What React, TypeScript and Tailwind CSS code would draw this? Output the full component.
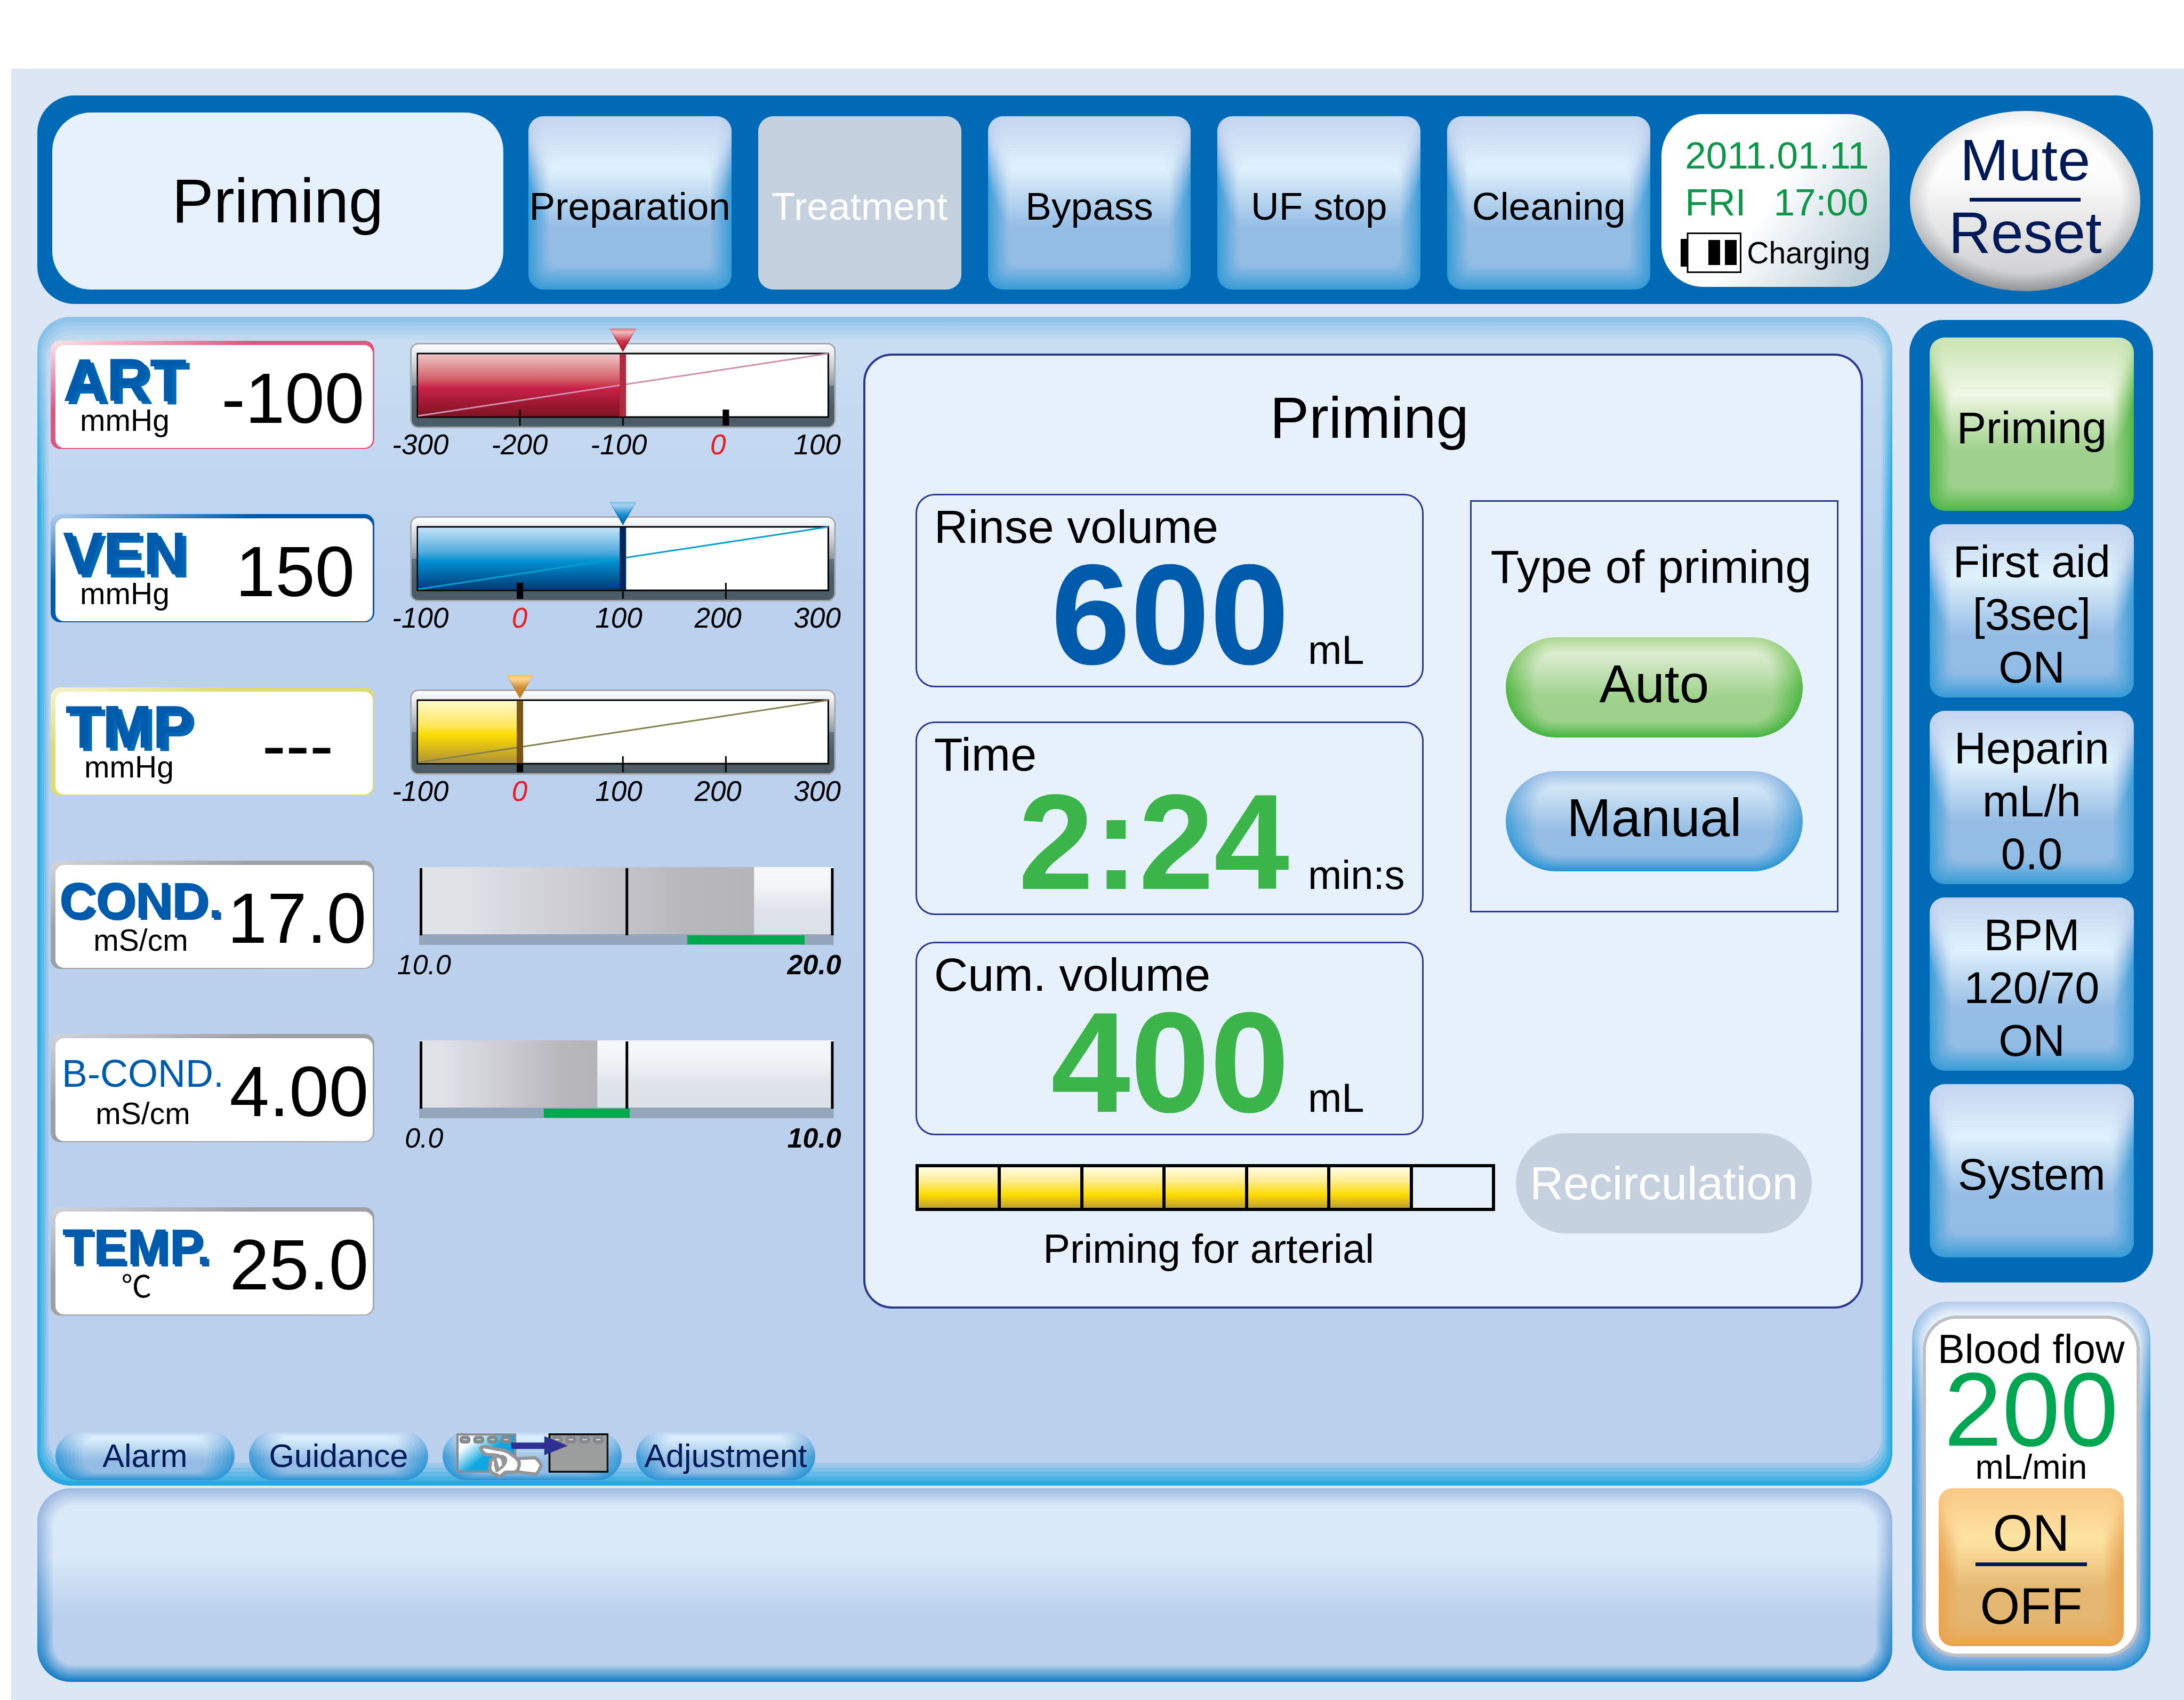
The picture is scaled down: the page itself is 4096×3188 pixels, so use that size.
import React from 'react';

type Stop = [number, string];

interface Skin {
  outer: Stop[];
  inner: Stop[];
  x: number;
  top: number;
  bottom: number;
  radius: number | string;
  innerRadius: number;
  steps: number;
}

const channels = (hex: string) => [1, 3, 5].map((i) => parseInt(hex.slice(i, i + 2), 16));

const mix = (a: string, b: string, t: number) => {
  const ca = channels(a);
  const cb = channels(b);
  return `rgb(${ca.map((v, i) => Math.round(v + (cb[i] - v) * t)).join(',')})`;
};

/* Bevelled surface: nested rounded layers blended from the outer to the inner gradient. */
function Gloss({ skin }: { skin: Skin }) {
  const layers = Array.from({ length: skin.steps + 1 }, (_, i) => i / skin.steps);
  return (
    <span aria-hidden="true" className="absolute inset-0">
      {layers.map((t) => {
        const stops = skin.outer.map(([pos, color], i) => {
          const [innerPos, innerColor] = skin.inner[i];
          return `${mix(color, innerColor, t)} ${pos + (innerPos - pos) * t}%`;
        });
        return (
          <span
            key={t}
            className="absolute"
            style={{
              left: skin.x * t,
              right: skin.x * t,
              top: skin.top * t,
              bottom: skin.bottom * t,
              borderRadius:
                typeof skin.radius === 'string' ? skin.radius : skin.radius + (skin.innerRadius - skin.radius) * t,
              background: `linear-gradient(to bottom, ${stops.join(', ')})`,
            }}
          />
        );
      })}
    </span>
  );
}

const blueKey: Skin = {
  outer: [[0, '#c5d6ef'], [14, '#b3caec'], [38, '#3f9fd8'], [100, '#389bd6']],
  inner: [[0, '#e0f4fe'], [14, '#cfe5f6'], [61, '#94bce5'], [100, '#93bce5']],
  x: 39, top: 97, bottom: 44, radius: 28, innerRadius: 16, steps: 18,
};
const greenKey: Skin = {
  outer: [[0, '#cce5b5'], [10, '#b5da9c'], [38, '#54b948'], [100, '#50b747']],
  inner: [[0, '#f1f8e8'], [10, '#e3f0d4'], [61, '#9ed18b'], [100, '#9ed18b']],
  x: 39, top: 104, bottom: 42, radius: 28, innerRadius: 16, steps: 22,
};
const orangeKey: Skin = {
  outer: [[0, '#f9c985'], [14, '#f5c079'], [45, '#eaa551'], [100, '#eaa34e']],
  inner: [[0, '#fee4a4'], [14, '#fadb98'], [61, '#e4b872'], [100, '#e3b771']],
  x: 38, top: 92, bottom: 46, radius: 26, innerRadius: 14, steps: 22,
};
const bluePill: Skin = {
  outer: [[0, '#a3c2e8'], [50, '#4ba3da'], [100, '#2c95d5']],
  inner: [[0, '#d3e7f6'], [66, '#94bce5'], [100, '#93bce5']],
  x: 56, top: 29, bottom: 29, radius: 94, innerRadius: 40, steps: 10,
};
const greenPill: Skin = {
  outer: [[0, '#acd890'], [50, '#56ba4a'], [100, '#45b340']],
  inner: [[0, '#deedd3'], [66, '#9ed18b'], [100, '#9ed18b']],
  x: 56, top: 29, bottom: 29, radius: 94, innerRadius: 40, steps: 20,
};
const tabSkin: Skin = {
  outer: [[0, '#bcd2ef'], [50, '#459fd9'], [100, '#2c95d5']],
  inner: [[0, '#def2fd'], [66, '#94bce5'], [100, '#93bce5']],
  x: 50, top: 11, bottom: 14, radius: 46, innerRadius: 26, steps: 7,
};
const ovalSkin: Skin = {
  outer: [[0, '#ededee'], [60, '#c6c7c9'], [100, '#929498']],
  inner: [[0, '#ffffff'], [35, '#fbfbfb'], [100, '#d1d1d3']],
  x: 34, top: 30, bottom: 34, radius: '50%', innerRadius: 0, steps: 20,
};
const mainFrame: Skin = {
  outer: [[0, '#90c4ea'], [15, '#29abe2'], [100, '#27aae2']],
  inner: [[0, '#c9def2'], [22, '#bbd1ee'], [100, '#bad0ed']],
  x: 21, top: 43, bottom: 43, radius: 62, innerRadius: 44, steps: 5,
};
const lowerFrame: Skin = {
  outer: [[0, '#a0bae2'], [35, '#92b4e0'], [100, '#137dc5']],
  inner: [[0, '#dae9f8'], [32, '#d9e9f7'], [68, '#bad0ed']],
  x: 30, top: 31, bottom: 31, radius: 62, innerRadius: 40, steps: 12,
};
const flowFrame: Skin = {
  outer: [[0, '#b5ccec'], [30, '#2c92d2'], [100, '#2590d1']],
  inner: [[0, '#eef7fd'], [30, '#bbd2ee'], [100, '#92b5e1']],
  x: 22, top: 27, bottom: 27, radius: 68, innerRadius: 60, steps: 14,
};

function HeaderKey({ label, disabled = false }: { label: string; disabled?: boolean }) {
  return (
    <button
      type="button"
      disabled={disabled}
      className={
        disabled
          ? 'relative flex h-[325px] min-w-0 items-center justify-center rounded-[28px] bg-[#c5d1df] text-white'
          : 'relative flex h-[325px] min-w-0 items-center justify-center rounded-[28px] text-black'
      }
    >
      {!disabled && <Gloss skin={blueKey} />}
      <span className="relative whitespace-nowrap pt-3 text-[73px] leading-[84px]">{label}</span>
    </button>
  );
}

function SideKey({ lines, skin = blueKey }: { lines: string[]; skin?: Skin }) {
  return (
    <button type="button" className="relative flex h-[325px] items-center justify-center text-black">
      <Gloss skin={skin} />
      <span className="relative flex flex-col items-center whitespace-nowrap pt-[14px] text-[83px] leading-[99px]">
        {lines.map((line) => (
          <span key={line}>{line}</span>
        ))}
      </span>
    </button>
  );
}

interface GaugeProps {
  id: string;
  at: number;
  zeroAt: number;
  fill: string[];
  bar: string;
  line: string;
  pointer: string[];
  labels: string[];
}

function Gauge({ id, at, zeroAt, fill, bar, line, pointer, labels }: GaugeProps) {
  const x = 13 + 772 * at;
  return (
    <div className="-mt-[23px]">
      <svg viewBox="0 0 798 187" className="block w-full" role="img" aria-label={`${id} gauge`}>
        <defs>
          <linearGradient id={`${id}-frame`} x1="0" y1="0" x2="0" y2="1">
            <stop offset="0" stopColor="#ffffff" />
            <stop offset="0.15" stopColor="#e3e6e9" />
            <stop offset="0.3" stopColor="#c3cad0" />
            <stop offset="0.5" stopColor="#8b98a2" />
            <stop offset="0.501" stopColor="#5f7380" />
            <stop offset="0.75" stopColor="#4c5c66" />
            <stop offset="1" stopColor="#4c5c66" />
          </linearGradient>
          <linearGradient id={`${id}-fill`} x1="0" y1="0" x2="0" y2="1">
            <stop offset="0" stopColor={fill[0]} />
            <stop offset="0.4" stopColor={fill[1]} />
            <stop offset="0.54" stopColor={fill[2]} />
            <stop offset="1" stopColor={fill[3]} />
          </linearGradient>
          <linearGradient id={`${id}-ptr`} x1="0" y1="0" x2="0" y2="1">
            <stop offset="0" stopColor={pointer[0]} />
            <stop offset="0.15" stopColor={pointer[1]} />
            <stop offset="0.55" stopColor={pointer[2]} />
            <stop offset="1" stopColor={pointer[3]} />
          </linearGradient>
        </defs>
        <rect x="1.5" y="28.5" width="795" height="157" rx="14" fill={`url(#${id}-frame)`} stroke="#a7a9ac" strokeWidth="3" />
        <rect x="14" y="47" width="770" height="119" fill="#ffffff" stroke="#000000" strokeWidth="3" />
        <rect x="15" y="49" width={x - 15} height="116" fill={`url(#${id}-fill)`} />
        <line x1="15" y1="164" x2="784" y2="47" stroke={line} strokeWidth="3" />
        {[0.25, 0.5, 0.75].map((p) => {
          const w = p === zeroAt ? 12 : 3;
          return <rect key={p} x={13 + 772 * p - w / 2} y="152" width={w} height="30" fill="#000000" />;
        })}
        <rect x={x - 6} y="48" width="12" height="117" fill={bar} />
        <polygon points={`${x - 25},0 ${x + 25},0 ${x},44`} fill={`url(#${id}-ptr)`} />
        <path d={`M${x - 25} 0L${x} 44L${x + 25} 0L${x} 36Z`} fill={pointer[3]} opacity="0.5" />
      </svg>
      <div className="-ml-[74px] -mr-[58px] mt-[3px] grid grid-cols-5 text-center text-[53px] italic leading-[56px]">
        {labels.map((l) => (
          <span key={l} className={l === '0' ? 'text-[#ed1c24]' : 'text-black'}>
            {l}
          </span>
        ))}
      </div>
    </div>
  );
}

interface LevelProps {
  id: string;
  level: number;
  range: [number, number];
  low: string;
  high: string;
}

function Level({ id, level, range, low, high }: LevelProps) {
  return (
    <div className="mt-3 pl-[17px] pr-1">
      <svg viewBox="0 0 777 146" className="block w-full" role="img" aria-label={`${id} level`}>
        <defs>
          <linearGradient id={`${id}-bg`} x1="0" y1="0" x2="0" y2="1">
            <stop offset="0" stopColor="#f7f8fa" />
            <stop offset="0.3" stopColor="#f2f3f6" />
            <stop offset="0.65" stopColor="#dee2e9" />
            <stop offset="1" stopColor="#dde0e7" />
          </linearGradient>
          <linearGradient id={`${id}-lv`} x1="0" y1="0" x2="1" y2="0">
            <stop offset="0" stopColor="#dfe2e7" />
            <stop offset="0.15" stopColor="#dfe1e7" />
            <stop offset="0.25" stopColor="#d9d9e0" />
            <stop offset="0.8" stopColor="#b8b7bc" />
            <stop offset="1" stopColor="#b5b4b9" />
          </linearGradient>
        </defs>
        <rect width="777" height="127" fill={`url(#${id}-bg)`} />
        <rect width={777 * level} height="127" fill={`url(#${id}-lv)`} />
        <rect y="126" width="777" height="20" fill="#94a6b9" />
        <rect x={777 * range[0]} y="128" width={777 * (range[1] - range[0])} height="17" fill="#00a94f" />
        <rect x="1" y="2" width="5" height="126" fill="#000000" />
        <rect x="387" y="2" width="5" height="126" fill="#000000" />
        <rect x="772" y="2" width="5" height="126" fill="#000000" />
      </svg>
      <div className="-ml-[44px] -mr-[14px] mt-2 flex justify-between text-[52px] italic leading-[58px]">
        <span className="min-w-[106px] text-center">{low}</span>
        <span className="font-bold">{high}</span>
      </div>
    </div>
  );
}

interface CardProps {
  label: string;
  unit: string;
  value: string;
  frame: string;
  labelClass: string;
  columnClass: string;
  valueClass: string;
}

function ValueCard({ label, unit, value, frame, labelClass, columnClass, valueClass }: CardProps) {
  return (
    <div className={`h-[203px] min-w-0 flex-[595] rounded-[18px] pb-0.5 pl-[9px] pr-[3px] pt-2 ${frame}`}>
      <div className="flex h-full items-center justify-between rounded-[16px] bg-white">
        <div className={`flex shrink-0 flex-col items-center pt-1 ${columnClass}`}>
          <span className={`whitespace-nowrap leading-[84px] text-[#005bac] ${labelClass}`}>{label}</span>
          <span className="text-[57px] leading-[66px]">{unit}</span>
        </div>
        <span className={`whitespace-nowrap pt-1.5 text-[134px] leading-[150px] ${valueClass}`}>{value}</span>
      </div>
    </div>
  );
}

const bigLabel = 'text-[113px] font-bold [text-shadow:7px_6px_0_#0068b5]';
const midLabel = 'text-[95px] font-bold [text-shadow:4px_4px_0_#005bac]';
const greyFrame = 'bg-[linear-gradient(to_bottom_right,#d3d5dc,#9fa0a4_32%,#9fa0a4_70%,#a9aaae)]';

const rows: { card: CardProps; meter: React.ReactNode }[] = [
  {
    card: {
      label: 'ART', unit: 'mmHg', value: '-100',
      frame: 'bg-[linear-gradient(to_bottom_right,#fbe6ea,#e3547f_32%)]',
      labelClass: bigLabel, columnClass: 'w-[260px]', valueClass: 'pr-4',
    },
    meter: (
      <Gauge
        id="ART" at={0.5} zeroAt={0.75}
        fill={['#eec3c5', '#d46067', '#c92048', '#7d1222']}
        bar="#b02a40" line="#cd91ae" pointer={['#de6f78', '#f0bcc0', '#cf3449', '#a31a2e']}
        labels={['-300', '-200', '-100', '0', '100']}
      />
    ),
  },
  {
    card: {
      label: 'VEN', unit: 'mmHg', value: '150',
      frame: 'bg-[linear-gradient(to_bottom_right,#b5d0ee,#005bac_32%)]',
      labelClass: bigLabel, columnClass: 'w-[260px]', valueClass: 'pr-[34px]',
    },
    meter: (
      <Gauge
        id="VEN" at={0.5} zeroAt={0.25}
        fill={['#c2e3f8', '#4fa9dd', '#0090d3', '#003a76']}
        bar="#00285a" line="#00a0cf" pointer={['#7cbfea', '#a5d2f0', '#1b8fd0', '#0064a8']}
        labels={['-100', '0', '100', '200', '300']}
      />
    ),
  },
  {
    card: {
      label: 'TMP', unit: 'mmHg', value: '---',
      frame: 'bg-[linear-gradient(to_bottom_right,#f7f4d0,#dddc6e_28%)]',
      labelClass: bigLabel, columnClass: 'w-[276px]', valueClass: 'pr-[74px]',
    },
    meter: (
      <Gauge
        id="TMP" at={0.25} zeroAt={0.25}
        fill={['#fff9cb', '#ffe75c', '#fcdc00', '#ae9238']}
        bar="#7a5317" line="#85814e" pointer={['#fdb83c', '#fedb96', '#cf8b33', '#b9792a']}
        labels={['-100', '0', '100', '200', '300']}
      />
    ),
  },
  {
    card: {
      label: 'COND.', unit: 'mS/cm', value: '17.0', frame: greyFrame,
      labelClass: midLabel, columnClass: 'w-[320px]', valueClass: '-ml-4 pr-3',
    },
    meter: <Level id="COND" level={0.808} range={[0.647, 0.93]} low="10.0" high="20.0" />,
  },
  {
    card: {
      label: 'B-COND.', unit: 'mS/cm', value: '4.00', frame: greyFrame,
      labelClass: 'text-[72px]', columnClass: 'w-[328px]', valueClass: '-ml-4 pr-2',
    },
    meter: <Level id="BCOND" level={0.43} range={[0.301, 0.508]} low="0.0" high="10.0" />,
  },
  {
    card: {
      label: 'TEMP.', unit: '℃', value: '25.0', frame: greyFrame,
      labelClass: midLabel, columnClass: 'w-[304px]', valueClass: 'pr-2',
    },
    meter: null,
  },
];

interface ReadoutProps {
  label: string;
  value: string;
  unit: string;
  space: string;
  valueClass: string;
}

function Readout({ label, value, unit, space, valueClass }: ReadoutProps) {
  return (
    <div className={`h-[363px] rounded-[36px] border-[3px] border-[#2b3990] pt-[15px] ${space}`}>
      <div className="pl-8 text-[88px] leading-[88px]">{label}</div>
      <div className="mt-[20px] grid grid-cols-[1fr_214px] items-baseline gap-[35px] whitespace-nowrap">
        <span className={`text-right font-bold leading-[200px] ${valueClass}`}>{value}</span>
        <span className="text-[76px] leading-[80px]">{unit}</span>
      </div>
    </div>
  );
}

function Pill({ label, skin }: { label: string; skin: Skin }) {
  return (
    <button type="button" className="relative flex h-[188px] w-full items-center justify-center">
      <Gloss skin={skin} />
      <span className="relative pb-[14px] text-[100px] leading-[110px]">{label}</span>
    </button>
  );
}

function ScreenSwitchIcon() {
  return (
    <svg viewBox="105 75 975 285" className="relative w-[285px]" aria-hidden="true">
      <defs>
        <linearGradient id="screen-live" x1="0.1" y1="0.15" x2="0.55" y2="0.5">
          <stop offset="0.2" stopColor="#ffffff" />
          <stop offset="1" stopColor="#0ea7e2" />
        </linearGradient>
      </defs>
      <rect x="112" y="82" width="370" height="238" fill="url(#screen-live)" stroke="#8a8b8f" strokeWidth="14" />
      {[125, 213, 301, 389].map((x) => (
        <g key={x}>
          <rect x={x} y="91" width="70" height="49" rx="20" fill="#87888c" />
          <rect x={x + 21} y="111" width="28" height="8" fill="#a5dbe2" />
        </g>
      ))}
      <rect x="702" y="81" width="372" height="240" fill="#9c9e9d" stroke="#000000" strokeWidth="12" />
      <rect x="709.5" y="88.5" width="361" height="226" fill="none" stroke="#808285" strokeWidth="3" />
      {[716, 804, 892, 980].map((x) => (
        <g key={x}>
          <rect x={x} y="91" width="70" height="49" rx="20" fill="#87888c" />
          <rect x={x + 21} y="111" width="28" height="8" fill="#d9d9cf" />
        </g>
      ))}
      <path d="M456 134H669V93L820 154L669 215V175H456Z" fill="#2e3192" />
      <path
        d="M508 236L612 232Q634 250 649 278Q640 312 616 336L560 330L492 320Z"
        fill="#ffffff"
        stroke="#939598"
        strokeWidth="20"
        strokeLinejoin="round"
      />
      <path
        d="M262 168Q274 158 300 163L372 178Q425 182 452 206Q506 240 509 270Q506 300 490 321Q470 327 440 324Q420 322 412 330Q398 349 378 349Q366 340 356 338Q330 332 321 310Q314 296 324 276Q318 254 334 240Q350 226 372 217Q330 212 305 212Q270 206 262 168Z"
        fill="#ffffff"
        stroke="#939598"
        strokeWidth="22"
        strokeLinejoin="round"
      />
      <path
        d="M372 214Q412 208 424 226Q436 242 428 262Q418 290 390 308Q374 318 368 326L350 318Q356 300 346 284Q340 262 346 244Q352 226 372 214Z"
        fill="#939598"
      />
      <path d="M362 238L372 230L392 244L398 278L380 296L372 270Z" fill="#ffffff" />
      <path d="M342 258L348 264L344 288L356 314L350 322Q330 308 330 290Q332 274 342 258Z" fill="#ffffff" />
      <path d="M374 332L384 322L390 334L380 340Z" fill="#ffffff" />
    </svg>
  );
}

function Tab({ children, label }: { children: React.ReactNode; label?: string }) {
  return (
    <button
      type="button"
      aria-label={label}
      className="relative flex h-[92px] w-[336px] items-center justify-center text-[61px] leading-[70px] text-[#001a57]"
    >
      <Gloss skin={tabSkin} />
      {children}
    </button>
  );
}

export default function App() {
  return (
    <div className="flex min-h-screen flex-col bg-white pl-[21px] pt-[129px] font-['Liberation_Sans','Noto_Sans_CJK_JP',sans-serif] text-black">
      <main className="flex flex-1 flex-col bg-[#dde6f5] pb-[34px] pl-[49px] pr-[58px] pt-[50px]">
        <header className="flex items-start rounded-[70px] bg-[#006ab7] pb-6 pl-7 pr-6 pt-[29px]">
          <h1 className="mt-[3px] flex h-[332px] flex-[846] items-center justify-center rounded-[72px] bg-[#e6f1fb] text-[117px] leading-[130px]">
            Priming
          </h1>
          <nav className="ml-[47px] mt-[10px] grid min-w-0 flex-[2105] grid-cols-5 gap-[50px]">
            <HeaderKey label="Preparation" />
            <HeaderKey label="Treatment" disabled />
            <HeaderKey label="Bypass" />
            <HeaderKey label="UF stop" />
            <HeaderKey label="Cleaning" />
          </nav>
          <div className="ml-[21px] mt-[6px] h-[324px] min-w-0 flex-[352] rounded-[78px] bg-[linear-gradient(125deg,#ffffff_48%,#b9ccd7_92%)] pl-9 pr-10 pt-[34px]">
            <div className="pl-2 text-[71px] leading-[88px] text-[#0c9648]">
              <div className="whitespace-nowrap">2011.01.11</div>
              <div className="flex justify-between">
                <span>FRI</span>
                <span>17:00</span>
              </div>
            </div>
            <div className="mt-3 flex items-center gap-[10px]">
              <svg viewBox="0 0 114 76" className="w-[114px] shrink-0" role="img" aria-label="Battery">
                <rect x="0" y="12" width="14" height="52" fill="#000000" />
                <rect x="13" y="1.5" width="99.5" height="73" fill="#ffffff" stroke="#000000" strokeWidth="3" />
                <rect x="52" y="14" width="22" height="47" fill="#000000" />
                <rect x="83" y="14" width="22" height="47" fill="#000000" />
              </svg>
              <span className="text-[57px] leading-[70px]">Charging</span>
            </div>
          </div>
          <button
            type="button"
            className="relative ml-[38px] flex h-[338px] min-w-0 flex-[432] flex-col items-center justify-center text-[110px] leading-[108px] text-[#001a57]"
          >
            <Gloss skin={ovalSkin} />
            <span className="relative">Mute</span>
            <span className="relative mb-1 mt-[17px] h-[7px] w-[208px] bg-[#001a57]" />
            <span className="relative mb-[18px]">Reset</span>
          </button>
        </header>

        <div className="mt-6 flex items-start gap-8">
          <div className="flex min-w-0 flex-[3477] flex-col gap-[5px]">
            <section className="relative pb-[10px] pt-[45px]">
              <Gloss skin={mainFrame} />
              <div className="relative flex items-start">
                <div className="flex min-w-0 flex-[1472] flex-col gap-[122px] pl-[25px] pr-[51px]">
                  {rows.map(({ card, meter }) => (
                    <div key={card.label} className="flex h-[203px] items-start gap-[67px]">
                      <ValueCard {...card} />
                      <div className="min-w-0 flex-[798]">{meter}</div>
                    </div>
                  ))}
                </div>

                <section className="mr-[55px] mt-6 min-w-0 flex-[1866] rounded-[54px] border-4 border-[#2b3990] bg-[#e6f1fb] pb-[64px]">
                  <h2 className="pl-6 pt-14 text-center text-[110px] leading-[120px]">Priming</h2>
                  <div className="mt-[83px] flex items-start gap-[87px] pl-[94px] pr-[42px]">
                    <div className="min-w-0 flex-[952]">
                      <Readout label="Rinse volume" value="600" unit="mL" space="" valueClass="text-[268px] text-[#005bac]" />
                      <Readout label="Time" value="2:24" unit="min:s" space="mt-16" valueClass="text-[254px] text-[#3bb54a]" />
                      <Readout label="Cum. volume" value="400" unit="mL" space="mt-[50px]" valueClass="text-[268px] text-[#3bb54a]" />
                    </div>
                    <div
                      role="group"
                      aria-labelledby="priming-type"
                      className="mt-3 h-[773px] min-w-0 flex-[556] border-[3px] border-[#2b3990] px-[64px] pt-[72px]"
                    >
                      <h3 id="priming-type" className="-mx-10 whitespace-nowrap pr-3 text-center text-[88px] leading-[100px]">
                        Type of priming
                      </h3>
                      <div className="mt-[82px] flex flex-col gap-[63px]">
                        <Pill label="Auto" skin={greenPill} />
                        <Pill label="Manual" skin={bluePill} />
                      </div>
                    </div>
                  </div>
                  <div className="-mt-1 flex items-start gap-[39px] pl-[94px] pr-[92px]">
                    <div className="min-w-0 flex-[1087] pt-[58px]">
                      <div
                        role="progressbar"
                        aria-label="Priming for arterial"
                        aria-valuenow={6}
                        aria-valuemin={0}
                        aria-valuemax={7}
                        className="grid h-[88px] grid-cols-7 gap-[6px] border-[6px] border-black bg-black"
                      >
                        {[0, 1, 2, 3, 4, 5].map((i) => (
                          <span key={i} className="bg-[linear-gradient(to_bottom,#fffde6,#feed98_32%,#ffdc00_68%,#bfa032)]" />
                        ))}
                        <span className="bg-[#e6f1fb]" />
                      </div>
                      <p className="mt-[27px] pl-3 text-center text-[76px] leading-[88px]">Priming for arterial</p>
                    </div>
                    <button
                      type="button"
                      disabled
                      className="flex h-[188px] min-w-0 flex-[554] items-center justify-center rounded-full bg-[#c5d1df] text-[87px] leading-[100px] text-white"
                    >
                      Recirculation
                    </button>
                  </div>
                </section>
              </div>

              <nav className="relative mt-[217px] flex gap-[27px] pl-[34px]">
                <Tab>
                  <span className="relative">Alarm</span>
                </Tab>
                <Tab>
                  <span className="relative">Guidance</span>
                </Tab>
                <Tab label="Switch screen">
                  <ScreenSwitchIcon />
                </Tab>
                <Tab>
                  <span className="relative">Adjustment</span>
                </Tab>
              </nav>
            </section>

            <section aria-label="Messages" className="relative h-[363px]">
              <Gloss skin={lowerFrame} />
            </section>
          </div>

          <aside className="mt-1.5 flex min-w-0 flex-[457] flex-col gap-9">
            <nav className="flex flex-col gap-[25px] rounded-[62px] bg-[#006ab7] pb-[47px] pl-[38px] pr-[36px] pt-[33px]">
              <SideKey lines={['Priming']} skin={greenKey} />
              <SideKey lines={['First aid', '[3sec]', 'ON']} />
              <SideKey lines={['Heparin', 'mL/h', '0.0']} />
              <SideKey lines={['BPM', '120/70', 'ON']} />
              <SideKey lines={['System']} />
            </nav>

            <section className="relative ml-[5px] mr-[5px] px-5 py-[26px]">
              <Gloss skin={flowFrame} />
              <div className="relative flex h-[640px] flex-col items-center rounded-[64px] border-[6px] border-[#bfc0c4] bg-white pt-[15px]">
                <h2 className="whitespace-nowrap text-[76px] leading-[84px]">Blood flow</h2>
                <p className="text-[196px] leading-[144px] text-[#00a651]">200</p>
                <p className="mb-[5px] text-[64px] leading-[70px]">mL/min</p>
                <button
                  type="button"
                  className="relative flex h-[296px] w-[347px] flex-col items-center justify-center pt-2 text-[96px] leading-[110px]"
                >
                  <Gloss skin={orangeKey} />
                  <span className="relative">ON</span>
                  <span className="relative mb-5 h-[7px] w-[209px] bg-[#001a57]" />
                  <span className="relative">OFF</span>
                </button>
              </div>
            </section>
          </aside>
        </div>
      </main>
    </div>
  );
}
